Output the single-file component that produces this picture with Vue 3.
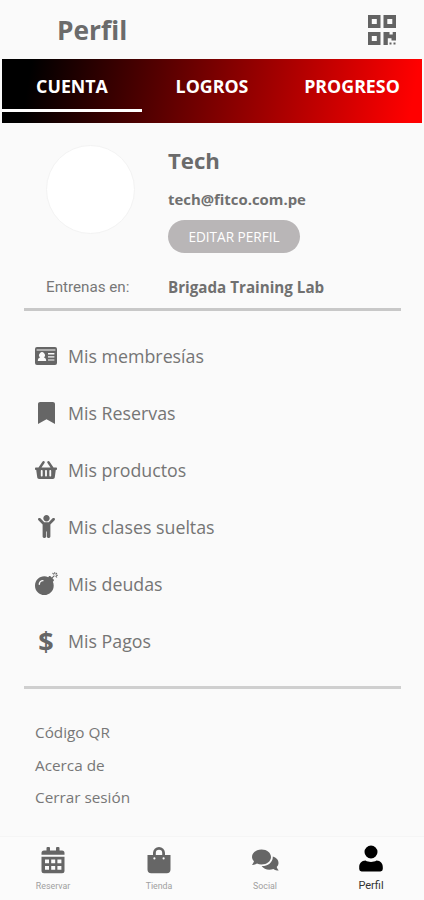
<template>
  <div class="profile-page">
    <header class="page-header">
      <h1>Perfil</h1>
      <svg class="qr-icon" viewBox="0 0 28 30">
        <path
          fill-rule="evenodd"
          d="M0 0h12.5v13H0zM3.8 4v5h5V4zM15.5 0H28v13H15.500zM19.300 4v5h5V4zM0 17h12.500v13H0zM3.800 21v5h5v-5zM15.500 17h6v2.600h3.200V17H28v8.500h-4.500v-2.200h-3.700V30h-4.300zM21.500 27.500h2v2h-2zM25.500 27.500h2v2h-2z" />
      </svg>
    </header>

    <nav class="tabs">
      <button
        v-for="tab in tabs"
        :key="tab"
        class="tab"
        :class="{ active: tab === activeTab }"
        @click="activeTab = tab">
        {{ tab }}
      </button>
    </nav>

    <section class="profile-section">
      <div class="avatar"></div>
      <div class="profile-info">
        <h2>Tech</h2>
        <p class="email">tech@fitco.com.pe</p>
        <button class="edit-button">EDITAR PERFIL</button>
      </div>
      <span class="gym-label">Entrenas en:</span>
      <span class="gym-name">Brigada Training Lab</span>
    </section>

    <ul class="menu">
      <li v-for="item in menuItems" :key="item.label" class="menu-item">
        <span class="menu-icon">
          <span v-if="item.glyph" class="glyph">{{ item.glyph }}</span>
          <svg
            v-else
            :viewBox="item.viewBox"
            :width="item.width"
            :height="item.height"
            preserveAspectRatio="none">
            <path fill-rule="evenodd" :d="item.path" />
          </svg>
        </span>
        <span class="menu-label">{{ item.label }}</span>
      </li>
    </ul>

    <ul class="links">
      <li v-for="link in links" :key="link">{{ link }}</li>
    </ul>

    <footer class="bottom-nav">
      <div
        v-for="item in navItems"
        :key="item.label"
        class="nav-item"
        :class="{ active: item.active }">
        <svg viewBox="0 0 28 28">
          <path fill-rule="evenodd" :d="item.path" />
        </svg>
        <span>{{ item.label }}</span>
      </div>
    </footer>
  </div>
</template>

<script setup>
import { ref } from "vue";

const tabs = ["CUENTA", "LOGROS", "PROGRESO"];
const activeTab = ref("CUENTA");

const menuItems = [
  {
    label: "Mis membresías",
    viewBox: "0 0 22 18",
    width: 22,
    height: 18,
    path: "M2 0h18a2 2 0 0 1 2 2v14a2 2 0 0 1-2 2H2a2 2 0 0 1-2-2V2a2 2 0 0 1 2-2zM1.600 2.600v1h18.800v-1zM2.800 14h8.400c0-2.400-1-3.400-2.400-3.500a2.900 2.900 0 1 0-3.600 0C3.800 10.600 2.800 11.600 2.800 14zM13 6v1.500h6.400V6zM13 9.200v1.400h6.400V9.200zM13 12.400v1.200h6.400v-1.200z",
  },
  {
    label: "Mis Reservas",
    viewBox: "0 0 384 512",
    width: 17,
    height: 22,
    path: "M0 512V48C0 21.490 21.490 0 48 0h288c26.510 0 48 21.490 48 48v464L192 400 0 512z",
  },
  {
    label: "Mis productos",
    viewBox: "0 32 576 448",
    width: 22,
    height: 18,
    path: "M576 216v16c0 13.255-10.745 24-24 24h-8l-26.113 182.788C514.509 462.435 494.257 480 470.370 480H105.630c-23.887 0-44.139-17.565-47.518-41.212L32 256h-8c-13.255 0-24-10.745-24-24v-16c0-13.255 10.745-24 24-24h67.341l106.780-146.821c10.395-14.292 30.407-17.453 44.701-7.058 14.293 10.395 17.453 30.408 7.058 44.701L170.477 192h235.046L326.120 82.821c-10.395-14.292-7.234-34.306 7.059-44.701 14.291-10.395 34.306-7.235 44.701 7.058L484.659 192H552c13.255 0 24 10.745 24 24zM312 392V280c0-13.255-10.745-24-24-24s-24 10.745-24 24v112c0 13.255 10.745 24 24 24s24-10.745 24-24zm112 0V280c0-13.255-10.745-24-24-24s-24 10.745-24 24v112c0 13.255 10.745 24 24 24s24-10.745 24-24zm-224 0V280c0-13.255-10.745-24-24-24s-24 10.745-24 24v112c0 13.255 10.745 24 24 24s24-10.745 24-24z",
  },
  {
    label: "Mis clases sueltas",
    viewBox: "0 0 384 512",
    width: 17,
    height: 23,
    path: "M120 72c0-39.765 32.235-72 72-72s72 32.235 72 72c0 39.764-32.235 72-72 72s-72-32.236-72-72zm254.627 1.373c-12.496-12.497-32.758-12.497-45.254 0L242.745 160H141.254L54.627 73.373c-12.496-12.497-32.758-12.497-45.254 0-12.497 12.497-12.497 32.758 0 45.255L104 213.254V480c0 17.673 14.327 32 32 32h16c17.673 0 32-14.327 32-32V368h16v112c0 17.673 14.327 32 32 32h16c17.673 0 32-14.327 32-32V213.254l94.627-94.626c12.497-12.497 12.497-32.758 0-45.255z",
  },
  {
    label: "Mis deudas",
    viewBox: "0 0 512 512",
    width: 23,
    height: 23,
    path: "M440.500 88.500l-52 52L415 167c9.400 9.400 9.400 24.600 0 33.900l-17.400 17.400c11.800 26.100 18.400 55.100 18.400 85.600 0 114.900-93.100 208-208 208S0 418.900 0 304 93.100 96 208 96c30.500 0 59.500 6.600 85.600 18.400L311 97c9.400-9.400 24.600-9.400 33.900 0l26.500 26.500 52-52 17.100 17zM500 60h-24c-6.600 0-12 5.400-12 12s5.400 12 12 12h24c6.600 0 12-5.400 12-12s-5.400-12-12-12zM440 0c-6.600 0-12 5.400-12 12v24c0 6.600 5.400 12 12 12s12-5.400 12-12V12c0-6.600-5.400-12-12-12zm33.900 55l17-17c4.700-4.700 4.700-12.300 0-17-4.700-4.700-12.300-4.700-17 0l-17 17c-4.700 4.700-4.700 12.300 0 17 4.800 4.700 12.400 4.700 17 0zm-67.800 0c4.700 4.700 12.300 4.700 17 0 4.700-4.700 4.700-12.300 0-17l-17-17c-4.700-4.700-12.300-4.700-17 0-4.700 4.700-4.700 12.300 0 17l17 17zm67.800 34c-4.700-4.700-12.300-4.700-17 0-4.700 4.700-4.700 12.300 0 17l17 17c4.700 4.700 12.300 4.700 17 0 4.700-4.700 4.700-12.300 0-17l-17-17zM112 272c0-35.300 28.700-64 64-64 8.800 0 16-7.200 16-16s-7.200-16-16-16c-52.900 0-96 43.100-96 96 0 8.800 7.200 16 16 16s16-7.200 16-16z",
  },
  { label: "Mis Pagos", glyph: "$" },
];

const links = ["Código QR", "Acerca de", "Cerrar sesión"];

const navItems = [
  {
    label: "Reservar",
    path: "M5 4.500h2.500V2a1 1 0 0 1 1-1H10a1 1 0 0 1 1 1v2.500h6V2a1 1 0 0 1 1-1h1.500a1 1 0 0 1 1 1v2.500H23A2.500 2.500 0 0 1 25.500 7v1.700h-23V7A2.500 2.500 0 0 1 5 4.500zM2.500 10.700h23v14A2.500 2.500 0 0 1 23 27.200H5a2.500 2.500 0 0 1-2.500-2.500zM6 13.500v3.700h4v-3.700zM12.200 13.500v3.700h4v-3.700zM18.400 13.500v3.700h4v-3.700zM6 20v3.700h4V20zM12.200 20v3.700h4V20zM18.400 20v3.700h4V20z",
  },
  {
    label: "Tienda",
    path: "M2.500 9H8V7a6 6 0 0 1 12 0v2h5.500v14.500a3.700 3.700 0 0 1-3.700 3.700H6.200a3.700 3.700 0 0 1-3.700-3.700zM10.800 9h6.400V7a3.200 3.200 0 0 0-6.400 0zM9.400 11.300a1.100 1.100 0 1 0 .01 2.200 1.100 1.100 0 0 0-.01-2.200zM18.600 11.300a1.100 1.100 0 1 0 .01 2.200 1.100 1.100 0 0 0-.01-2.200z",
  },
  {
    label: "Social",
    path: "M10.500 3.500C16 3.500 20 7 20 11s-4 7.500-9.500 7.500c-1.700 0-3.200-.3-4.500-1-1.500 1-3.300 1.500-5 1.500 1-1.200 1.700-2.500 2-3.700C1.700 14 1 12.500 1 11c0-4 4-7.500 9.500-7.500zM21.800 10.600C25.300 11.500 27.500 14 27.500 17c0 1.500-.6 2.900-1.800 4 .3 1.300 1 2.500 2 3.500-2 0-3.700-.5-5.300-1.500-4.800 1.500-9.500.3-11.800-3C16.500 20.200 22 16.500 21.800 10.600z",
  },
  {
    label: "Perfil",
    active: true,
    path: "M14-.500a6.500 6.500 0 1 0 .01 13A6.500 6.500 0 0 0 14-.500zM8.500 14.500c1.700 1 3.400 1.400 5.500 1.400s3.800-.4 5.500-1.400c4 0 6.300 3 6.300 6.700V23a2.400 2.400 0 0 1-2.400 2.400H4.600A2.400 2.400 0 0 1 2.200 23v-1.800c0-3.700 2.300-6.700 6.300-6.700z",
  },
];
</script>

<style>
body {
  margin: 0;
  background: #fafafa;
}
</style>

<style scoped>
.profile-page {
  display: flex;
  flex-direction: column;
  height: 900px;
  overflow: hidden;
  background: #fafafa;
  color: #6b6b6b;
  font-family: "Open Sans", "Noto Sans", sans-serif;
}

h1,
h2,
p,
ul {
  margin: 0;
  padding: 0;
  list-style: none;
}

button {
  border: none;
  padding: 0;
  font-family: inherit;
  cursor: pointer;
}

svg {
  display: block;
  overflow: visible;
  fill: currentColor;
}

.page-header {
  display: flex;
  justify-content: space-between;
  align-items: center;
  box-sizing: border-box;
  height: 59px;
  padding: 0 28px 0 57px;
}

.page-header h1 {
  font-size: 26.3px;
  font-weight: 700;
  line-height: 58px;
}

.qr-icon {
  width: 28px;
  height: 30px;
  color: #636363;
}

.tabs {
  display: grid;
  grid-template-columns: repeat(3, 1fr);
  height: 64px;
  margin: 0 2px;
  background: linear-gradient(100deg, #000 7%, #f00 97%);
}

.tab {
  height: 53px;
  padding-top: 4px;
  border-bottom: 3px solid transparent;
  background: none;
  color: #fff;
  font-size: 17.8px;
  font-weight: 700;
}

.tab.active {
  border-bottom-color: #fff;
}

.profile-section {
  display: grid;
  grid-template-columns: 122px 1fr;
  grid-template-rows: 127px 30px;
  box-sizing: border-box;
  height: 188px;
  margin: 0 23px 0 24px;
  padding: 22px 0 0 22px;
  border-bottom: 3px solid #c8c8c8;
}

.avatar {
  box-sizing: border-box;
  width: 89px;
  height: 89px;
  border: 1px solid #f3f3f3;
  border-radius: 50%;
  background: #fff;
}

.profile-info h2 {
  font-size: 22.2px;
  line-height: 31px;
}

.email {
  padding-top: 9px;
  color: #707070;
  font-size: 14.9px;
  font-weight: 700;
  line-height: 28px;
}

.edit-button {
  display: block;
  width: 132px;
  height: 33px;
  margin-top: 7px;
  border-radius: 17px;
  background: #b9b6b7;
  color: #fff;
  font-size: 13.6px;
}

.gym-label,
.gym-name {
  font-size: 15.2px;
  line-height: 30px;
}

.gym-label {
  color: #777;
  font-family: Roboto, sans-serif;
}

.gym-name {
  color: #707070;
  font-weight: 700;
}

.menu {
  box-sizing: border-box;
  height: 378px;
  margin: 0 23px 0 24px;
  padding-top: 16px;
  border-bottom: 3px solid #cfcfcf;
}

.menu-item {
  display: flex;
  align-items: center;
  height: 57.1px;
}

.menu-icon {
  display: flex;
  justify-content: center;
  align-items: center;
  width: 44px;
  color: #666;
}

.glyph {
  font-size: 27px;
  font-weight: 700;
  line-height: 30px;
}

.menu-label {
  color: #757575;
  font-size: 17.8px;
}

.links {
  flex: 1;
  padding: 27px 0 0 35px;
}

.links li {
  color: #777;
  font-size: 15.3px;
  line-height: 32.5px;
}

.bottom-nav {
  display: grid;
  grid-template-columns: repeat(4, 1fr);
  box-sizing: border-box;
  height: 64px;
  padding-top: 9px;
  border-top: 1px solid #f5f5f5;
  background: #fbfbfb;
}

.nav-item {
  display: flex;
  flex-direction: column;
  align-items: center;
  color: #666;
}

.nav-item svg {
  width: 28px;
  height: 28px;
}

.nav-item span {
  color: #a0a0a0;
  font-family: Roboto, sans-serif;
  font-size: 8.8px;
  line-height: 24px;
}

.nav-item.active {
  color: #000;
}

.nav-item.active span {
  color: #333;
  font-size: 11px;
  line-height: 23px;
}
</style>
